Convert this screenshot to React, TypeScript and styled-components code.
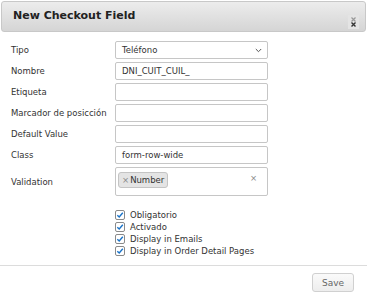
import React from "react";
import styled, { createGlobalStyle } from "styled-components";

const GlobalStyle = createGlobalStyle`
  html, body {
    margin: 0;
    padding: 0;
    background: #ffffff;
  }
  body {
    font-family: "DejaVu Sans", Verdana, sans-serif;
    font-size: 8.5px;
    color: #333;
  }
`;

const Dialog = styled.div`
  width: 367px;
  height: 300px;
  display: flex;
  flex-direction: column;
  background: #fff;
`;

const TitleBar = styled.div`
  margin: 1px 1px 0 1px;
  height: 31px;
  box-sizing: border-box;
  display: flex;
  align-items: center;
  justify-content: space-between;
  padding: 0 6px 0 11px;
  border: 1px solid #c8c8c8;
  border-radius: 3px;
  background: linear-gradient(#ececec, #d5d5d5);
`;

const Title = styled.h1`
  margin: 0 0 3px 0;
  font-family: "DejaVu Sans", Verdana, sans-serif;
  font-size: 11px;
  font-weight: bold;
  color: #222;
`;

const CloseButton = styled.svg`
  width: 11px;
  height: 14px;
  margin-top: 11px;
  background: #e4e4e4;
`;

const Body = styled.div`
  flex: 1;
  padding: 9px 0 0 11px;
  display: flex;
  flex-direction: column;
`;

const Row = styled.div<{ $tall?: boolean }>`
  display: grid;
  grid-template-columns: 104px 153px;
  align-items: center;
  height: ${({ $tall }) => ($tall ? "29px" : "18px")};
  margin-bottom: 3px;
`;

const Label = styled.label`
  color: #333;
  white-space: nowrap;
`;

const Input = styled.div`
  box-sizing: border-box;
  height: 18px;
  border: 1px solid #c6c6c6;
  border-radius: 2px;
  padding: 0 6px;
  display: flex;
  align-items: center;
  justify-content: space-between;
  color: #333;
`;

const Chevron = styled.svg`
  width: 7px;
  height: 5px;
  margin-right: -1px;
`;

const MultiBox = styled.div`
  box-sizing: border-box;
  height: 29px;
  border: 1px solid #c6c6c6;
  border-radius: 2px;
  padding: 0 10px 0 2px;
  display: flex;
  align-items: center;
  justify-content: space-between;
`;

const Tag = styled.span`
  box-sizing: border-box;
  height: 16px;
  display: flex;
  align-items: center;
  gap: 1px;
  padding: 0 3px;
  background: #e4e4e4;
  border: 1px solid #c4c4c4;
  border-radius: 3px;
  color: #333;
  margin-bottom: 4px;
`;

const TagX = styled.span`
  color: #888;
`;

const ClearX = styled.span`
  color: #888;
  margin-bottom: 8px;
`;

const Checks = styled.div`
  display: flex;
  flex-direction: column;
  margin: 10px 0 0 104px;
`;

const CheckRow = styled.div`
  display: flex;
  align-items: center;
  gap: 5px;
  height: 12px;
`;

const Box = styled.span`
  box-sizing: border-box;
  width: 10px;
  height: 10px;
  border: 1px solid #8a8a8a;
  border-radius: 2px;
  background: #fff;
  display: flex;
  align-items: center;
  justify-content: center;
`;

const Footer = styled.div`
  border-top: 1px solid #dcdcdc;
  height: 35px;
  display: flex;
  justify-content: flex-end;
  align-items: flex-start;
  padding: 7px 13px 0 0;
  box-sizing: border-box;
`;

const SaveButton = styled.button`
  width: 42px;
  height: 19px;
  font-family: "DejaVu Sans", Verdana, sans-serif;
  font-size: 9px;
  color: #666;
  background: linear-gradient(#fafafa, #ededed);
  border: 1px solid #d0d0d0;
  border-radius: 3px;
  padding: 0;
`;

const checks = [
  "Obligatorio",
  "Activado",
  "Display in Emails",
  "Display in Order Detail Pages",
];

const fields: { label: string; value?: string }[] = [
  { label: "Nombre", value: "DNI_CUIT_CUIL_" },
  { label: "Etiqueta" },
  { label: "Marcador de posicción" },
  { label: "Default Value" },
  { label: "Class", value: "form-row-wide" },
];

const App: React.FC = () => {
  return (
    <Dialog>
      <GlobalStyle />
      <TitleBar>
        <Title>New Checkout Field</Title>
        <CloseButton viewBox="0 0 11 14">
          <path d="M3.5 2.5 L7.5 6.5 M7.5 2.5 L3.5 6.5" stroke="#999" strokeWidth="1.2" />
          <path d="M3.5 7.5 L7.5 11.5 M7.5 7.5 L3.5 11.5" stroke="#333" strokeWidth="1.4" />
        </CloseButton>
      </TitleBar>
      <Body>
        <Row>
          <Label>Tipo</Label>
          <Input>
            <span>Teléfono</span>
            <Chevron viewBox="0 0 7 5">
              <path d="M0.8 1 L3.5 3.7 L6.2 1" fill="none" stroke="#555" strokeWidth="1" />
            </Chevron>
          </Input>
        </Row>
        {fields.map((field, idx) => (
          <Row key={idx}>
            <Label>{field.label}</Label>
            <Input>{field.value && <span>{field.value}</span>}</Input>
          </Row>
        ))}
        <Row $tall>
          <Label>Validation</Label>
          <MultiBox>
            <Tag>
              <TagX>×</TagX>Number
            </Tag>
            <ClearX>×</ClearX>
          </MultiBox>
        </Row>
        <Checks>
          {checks.map((c, idx) => (
            <CheckRow key={idx}>
              <Box>
                <svg width="8" height="8" viewBox="0 0 8 8">
                  <path d="M1.3 4.2 L3.2 6 L6.8 1.8" fill="none" stroke="#1a73c8" strokeWidth="1.4" />
                </svg>
              </Box>
              <span>{c}</span>
            </CheckRow>
          ))}
        </Checks>
      </Body>
      <Footer>
        <SaveButton>Save</SaveButton>
      </Footer>
    </Dialog>
  );
};

export default App;
